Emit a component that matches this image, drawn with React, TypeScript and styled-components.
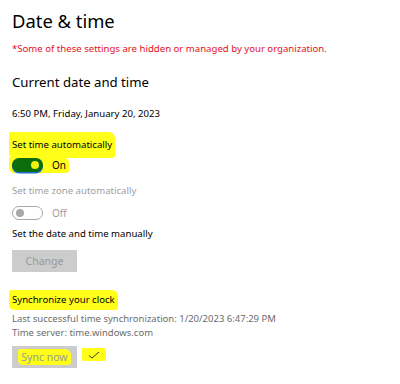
import styled, { createGlobalStyle } from "styled-components";

const GlobalStyle = createGlobalStyle`
  body {
    margin: 0;
    background: #ffffff;
    font-family: "Noto Sans", "Open Sans", sans-serif;
    color: #000000;
  }
`;

const Page = styled.div`
  width: 400px;
  height: 384px;
  box-sizing: border-box;
  padding: 7px 0 0 12px;
  overflow: hidden;
`;

const Title = styled.h1`
  margin: 0;
  font-size: 18.4px;
  line-height: 28px;
  font-weight: 400;
`;

const Notice = styled.p`
  margin: 6px 0 0;
  font-size: 9.6px;
  line-height: 16px;
  color: #e3121e;
`;

const Heading = styled.h2`
  margin: 15px 0 0;
  font-size: 13.2px;
  line-height: 20px;
  font-weight: 400;
`;

const Text = styled.div<{ $gap: number; $muted?: boolean }>`
  margin-top: ${(p) => p.$gap}px;
  font-size: 9.6px;
  line-height: 16px;
  color: ${(p) => (p.$muted ? "#a0a0a0" : "#000000")};
`;

const Info = styled.div<{ $gap?: number }>`
  margin-top: ${(p) => p.$gap ?? 0}px;
  font-size: 9.5px;
  line-height: 14px;
  color: #6b6b6b;
`;

const Marker = styled.span<{ $pad?: number }>`
  display: inline-flex;
  align-items: center;
  gap: 9px;
  background: #ffff1a;
  padding: ${(p) => p.$pad ?? 4}px 3px;
  margin: -${(p) => p.$pad ?? 4}px -3px;
  border-radius: 2px 6px 3px 5px;
`;

const ToggleRow = styled.div<{ $gap: number }>`
  margin-top: ${(p) => p.$gap}px;
  height: 14px;
  display: flex;
  align-items: center;
  gap: 9px;
  font-size: 10px;
  line-height: 14px;
`;

const Track = styled.span<{ $on: boolean }>`
  position: relative;
  display: inline-block;
  width: 31px;
  height: 14px;
  box-sizing: border-box;
  border-radius: 7px;
  background: ${(p) => (p.$on ? "#0b6e0b" : "#ffffff")};
  border: ${(p) => (p.$on ? "none" : "1.5px solid #a8a8a8")};
  box-shadow: ${(p) => (p.$on ? "0 1.5px 0 #1f6fd1" : "none")};
`;

const Knob = styled.span<{ $on: boolean }>`
  position: absolute;
  top: 50%;
  width: 8px;
  height: 8px;
  margin-top: -4px;
  border-radius: 50%;
  background: ${(p) => (p.$on ? "#f2f20c" : "#a8a8a8")};
  ${(p) => (p.$on ? "right: 4px;" : "left: 3px;")}
`;

const StateLabel = styled.span<{ $muted?: boolean }>`
  color: ${(p) => (p.$muted ? "#a0a0a0" : "#000000")};
`;

const Button = styled.div<{ $gap: number }>`
  margin-top: ${(p) => p.$gap}px;
  width: 65px;
  height: 22px;
  background: #cccccc;
  color: #999999;
  font-size: 10.5px;
  display: flex;
  align-items: center;
  justify-content: center;
`;

const ButtonRow = styled.div`
  margin-top: 6px;
  display: flex;
  align-items: center;
  gap: 5px;
`;

const Check = styled.span`
  display: inline-flex;
  align-items: center;
  justify-content: center;
  width: 24px;
  height: 13px;
  margin-top: -5px;
  background: #ffff1a;
  border-radius: 1px 3px 2px 1px;
`;

export default function App() {
  return (
    <>
      <GlobalStyle />
      <Page>
        <Title>Date &amp; time</Title>
        <Notice>*Some of these settings are hidden or managed by your organization.</Notice>
        <Heading>Current date and time</Heading>
        <Text $gap={14}>6:50 PM, Friday, January 20, 2023</Text>

        <Text $gap={15}>
          <Marker $pad={5}>Set time automatically</Marker>
        </Text>
        <ToggleRow $gap={5}>
          <Marker $pad={1}>
            <Track $on>
              <Knob $on />
            </Track>
            <StateLabel>On</StateLabel>
          </Marker>
        </ToggleRow>

        <Text $gap={11} $muted>
          Set time zone automatically
        </Text>
        <ToggleRow $gap={7}>
          <Track $on={false}>
            <Knob $on={false} />
          </Track>
          <StateLabel $muted>Off</StateLabel>
        </ToggleRow>

        <Text $gap={6}>Set the date and time manually</Text>
        <Button $gap={8}>Change</Button>

        <Text $gap={20}>
          <Marker $pad={2}>Synchronize your clock</Marker>
        </Text>
        <Info $gap={4}>Last successful time synchronization: 1/20/2023 6:47:29 PM</Info>
        <Info>Time server: time.windows.com</Info>
        <ButtonRow>
          <Button $gap={0}>
            <Marker $pad={1}>Sync now</Marker>
          </Button>
          <Check>
            <svg width="12" height="8" viewBox="0 0 12 8">
              <path d="M1 4.5 L4 7 L11 1" fill="none" stroke="#333" strokeWidth="1" />
            </svg>
          </Check>
        </ButtonRow>
      </Page>
    </>
  );
}
